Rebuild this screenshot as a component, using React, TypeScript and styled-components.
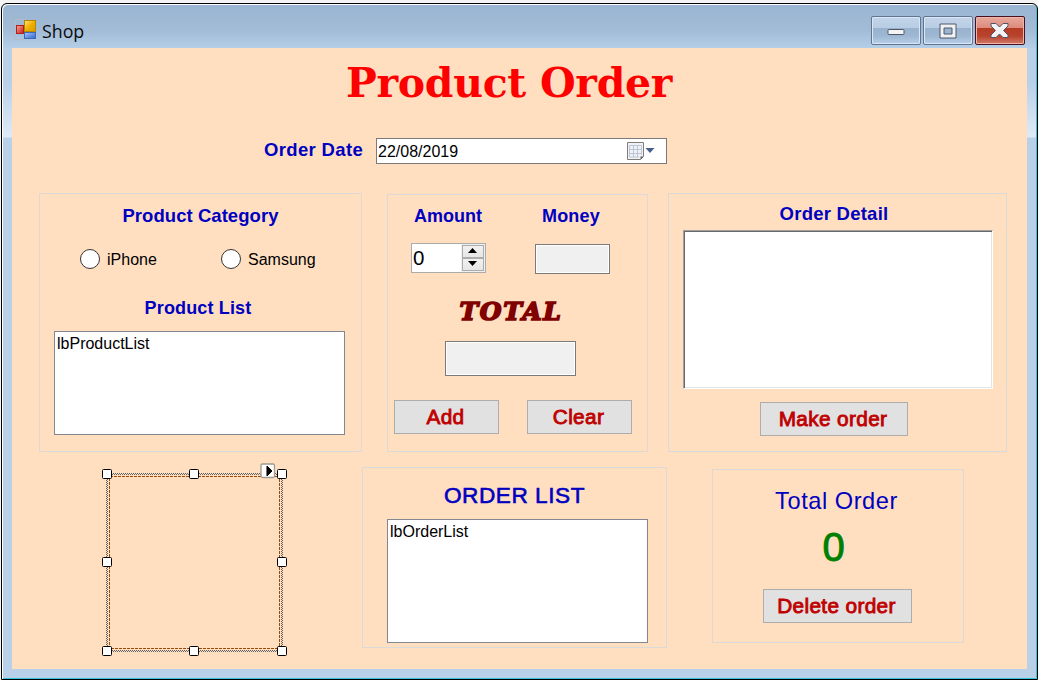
import React from 'react';
import styled, { createGlobalStyle } from 'styled-components';

const GlobalStyle = createGlobalStyle`
  * { box-sizing: border-box; }
  html, body { margin: 0; padding: 0; }
  body { background: #f4f4f5; overflow: hidden; font-family: "Liberation Sans", Arial, sans-serif; }
`;

const Desktop = styled.div`
  width: 1038px;
  height: 680px;
  padding: 3px 0 0 1px;
`;

const WindowFrame = styled.div`
  width: 1037px;
  height: 677px;
  display: flex;
  flex-direction: column;
  border: 1px solid #000;
  border-radius: 6px 6px 0 0;
  padding: 1px 9px 10px 10px;
  background:
    linear-gradient(#b9d0e9 0, #b9d0e9 34px, #dfeaf6 88px, #b9d0e9 89px) 0 45px / 100% 100% no-repeat,
    linear-gradient(#9ab5d2 0, #a2bbd6 26px, #b4cde7 43px, #b9d0e9 45px);
  box-shadow: inset 1px 1px 0 #fff, inset -1px -1px 0 #35c4dc;
`;

const TitleBar = styled.header`
  height: 43px;
  flex: none;
  display: flex;
  align-items: flex-start;
  padding: 0 3px 0 3px;
`;

const AppIcon = styled.svg`
  width: 21px;
  height: 21px;
  margin-top: 14px;
`;

const WindowTitle = styled.span`
  flex: 1;
  margin: 14px 0 0 6px;
  font: 17.8px/24px "Open Sans", "Noto Sans", sans-serif;
  color: #0a0a0a;
`;

const Captions = styled.div`
  display: flex;
  gap: 2px;
  margin-top: 11px;
`;

const CaptionButton = styled.button<{ $close?: boolean }>`
  width: 50px;
  height: 29px;
  padding: 0 1px 0 0;
  border: 1px solid ${p => (p.$close ? '#4a1020' : '#5f7592')};
  border-radius: 2px;
  display: grid;
  place-items: center;
  background: ${p =>
    p.$close
      ? 'linear-gradient(#e7a99d 0, #dc8a7b 11px, #b43c25 11px, #b8422b 19px, #d17a68 100%)'
      : 'linear-gradient(#c2d4e8 0, #b8cde3 11px, #98b1cd 11px, #9eb7d2 19px, #b8d0e9 100%)'};
  box-shadow: inset 0 0 0 1px ${p => (p.$close ? '#eeb5aa' : '#dbe7f4')};
`;

const Client = styled.main`
  flex: 1;
  width: 1015px;
  background: #ffdfc0;
  display: flex;
  flex-direction: column;
`;

const Heading = styled.h1`
  margin: 4px 0 0;
  padding-right: 21px;
  height: 62px;
  text-align: center;
  font: bold 41px/62px "DejaVu Serif", serif;
  letter-spacing: -0.3px;
  white-space: nowrap;
  color: #f00;
`;

const DateRow = styled.div`
  display: flex;
  height: 26px;
  margin: 24px 0 0 252px;
`;

const Label = styled.span<{
  $size?: number;
  $bold?: boolean;
  $spacing?: number;
  $line?: number;
  $stroke?: number;
  $color?: string;
  $shift?: number;
  $top?: number;
}>`
  display: block;
  white-space: nowrap;
  text-align: center;
  margin-top: ${p => p.$top ?? 0}px;
  font-size: ${p => p.$size ?? 18}px;
  font-weight: ${p => (p.$bold ? 700 : 400)};
  line-height: ${p => p.$line ?? 20}px;
  letter-spacing: ${p => p.$spacing ?? 0}px;
  padding-right: ${p => p.$shift ?? 0}px;
  color: ${p => p.$color ?? '#0000c0'};
  -webkit-text-stroke: ${p => p.$stroke ?? 0}px ${p => p.$color ?? '#0000c0'};
`;

const DateLabel = styled.div`
  width: 112px;
  padding-top: 2px;
  display: flex;
`;

const DatePicker = styled.div`
  width: 291px;
  height: 26px;
  border: 1px solid #7a7a7a;
  background: #fff;
  display: flex;
  align-items: center;
  padding: 0 11px 0 1px;
  font-size: 16px;
  color: #000;
`;

const DateValue = styled.span`
  flex: 1;
  line-height: 24px;
  padding-top: 1px;
`;

const GroupRow = styled.section<{ $top: number; $left: number }>`
  display: flex;
  align-items: flex-start;
  margin: ${p => p.$top}px 0 0 ${p => p.$left}px;
`;

const Group = styled.div<{ $w: number; $h: number; $x?: number; $y?: number; $pad?: number }>`
  width: ${p => p.$w}px;
  height: ${p => p.$h}px;
  margin: ${p => p.$y ?? 0}px 0 0 ${p => p.$x ?? 0}px;
  padding-top: ${p => p.$pad ?? 0}px;
  border: 1px solid #dcdad9;
  display: flex;
  flex-direction: column;
`;

const Radios = styled.div`
  display: flex;
  margin: 22px 0 28px 40px;
`;

const Radio = styled.label<{ $w: number }>`
  display: flex;
  align-items: center;
  width: ${p => p.$w}px;
  height: 22px;
  gap: 7px;
  font-size: 16px;
  line-height: 20px;
  color: #000;
`;

const RadioText = styled.span`
  padding-top: 2px;
`;

const RadioDot = styled.span`
  width: 20px;
  height: 20px;
  border: 1px solid #333;
  border-radius: 50%;
  background: #fff;
`;

const ListBox = styled.div<{ $w: number; $h: number; $x: number; $y: number }>`
  width: ${p => p.$w}px;
  height: ${p => p.$h}px;
  margin: ${p => p.$y}px 0 0 ${p => p.$x}px;
  border: 1px solid #828790;
  background: #fff;
  padding: 2px;
  font-size: 16px;
  line-height: 20px;
  color: #000;
`;

const Pair = styled.div<{ $x: number; $gap: number; $y?: number }>`
  display: flex;
  gap: ${p => p.$gap}px;
  margin: ${p => p.$y ?? 0}px 0 0 ${p => p.$x}px;
`;

const Spinner = styled.div`
  width: 75px;
  height: 30px;
  border: 1px solid #ababab;
  background: #fff;
  display: flex;
  justify-content: space-between;
  font-size: 20.5px;
  line-height: 28px;
  padding-left: 1px;
  color: #000;
`;

const SpinButtons = styled.div`
  display: flex;
  flex-direction: column;
  width: 24px;
  padding: 1px;
  background: #f0f0f0;
`;

const SpinButton = styled.span`
  flex: 1;
  display: flex;
  justify-content: center;
  padding: 2px 1px 0 0;
  border: 1px solid #acacac;
  background: linear-gradient(#f1f1f1, #e6e6e6);
`;

const ReadOnly = styled.div<{ $w: number; $h: number; $x?: number; $y: number }>`
  width: ${p => p.$w}px;
  height: ${p => p.$h}px;
  margin: ${p => p.$y}px 0 0 ${p => p.$x ?? 0}px;
  border: 1px solid #7a7a7a;
  background: #f0f0f0;
  box-shadow: inset 0 0 0 1px #fff;
`;

const Total = styled.span`
  display: block;
  height: 30px;
  margin: 23px 0 0 -13px;
  text-align: center;
  font: italic bold 25px/30px "DejaVu Serif", serif;
  letter-spacing: 1.7px;
  -webkit-text-stroke: 1.7px #800000;
  color: #800000;
`;

const Button = styled.button<{ $w: number; $x?: number; $y?: number }>`
  width: ${p => p.$w}px;
  height: 34px;
  margin: ${p => p.$y ?? 0}px 0 0 ${p => p.$x ?? 0}px;
  padding: 0 2px 0 0;
  border: 1px solid #adadad;
  background: #e1e1e1;
  font: 20.8px/30px "Liberation Sans", Arial, sans-serif;
  letter-spacing: 0.35px;
  -webkit-text-stroke: 0.85px #c00000;
  color: #c00000;
`;

const RichText = styled.div`
  width: 310px;
  height: 159px;
  margin: 6px 0 0 14px;
  background: #fff;
  border: 1px solid;
  border-color: #a0a0a0 #fff #fff #a0a0a0;
  box-shadow: inset 1px 1px 0 #696969, inset -1px -1px 0 #e3e3e3;
`;

const PictureBox = styled.svg`
  width: 190px;
  height: 200px;
  display: block;
`;

const handles = [
  [102, 469], [189, 469], [277, 469],
  [102, 557], [277, 557],
  [102, 646], [189, 646], [277, 646],
];

function SelectedPicture() {
  return (
    <PictureBox viewBox="100 460 190 200" shapeRendering="crispEdges">
      <defs>
        <pattern id="hatch" width="2" height="2" patternUnits="userSpaceOnUse">
          <rect width="1" height="1" fill="#5f6064" />
          <rect x="1" y="1" width="1" height="1" fill="#5f6064" />
        </pattern>
      </defs>
      <path d="M106 473H283V652H106ZM108 475V650H281V475Z" fill="url(#hatch)" fillRule="evenodd" />
      <rect x="109.500" y="476.500" width="170" height="172" fill="none" stroke="#964a08" strokeDasharray="3 1" />
      {handles.map(([x, y]) => (
        <rect key={`${x}-${y}`} x={x + 0.5} y={y + 0.5} width="9" height="9" rx="1" fill="#fff" stroke="#000" shapeRendering="auto" />
      ))}
      <rect x="261" y="464" width="13.500" height="13.500" rx="1.500" fill="#fff" stroke="#a09a90" strokeWidth="1.300" shapeRendering="auto" />
      <path d="M266 466H268V476H266Z" fill="#77736e" />
      <path d="M267 466V476L272 471Z" fill="#000" />
    </PictureBox>
  );
}

export default function App() {
  return (
    <>
      <GlobalStyle />
      <Desktop>
        <WindowFrame>
          <TitleBar>
            <AppIcon viewBox="0 0 21 21">
              <defs>
                <linearGradient id="gold" x1="0" y1="0" x2="1" y2="1"><stop offset="0" stopColor="#ffe680" /><stop offset=".5" stopColor="#efb000" /><stop offset="1" stopColor="#d89a00" /></linearGradient>
                <linearGradient id="rose" x1="0" y1="0" x2="1" y2="1"><stop offset="0" stopColor="#f5a9a0" /><stop offset="1" stopColor="#c51a10" /></linearGradient>
                <linearGradient id="azure" x1="0" y1="0" x2="1" y2="1"><stop offset="0" stopColor="#a9c8ff" /><stop offset="1" stopColor="#2c62c8" /></linearGradient>
              </defs>
              <path d="M9 .5H.5V20.500H9" fill="none" stroke="#b4bcc4" />
              <rect x="9.500" y="1.500" width="11" height="11" fill="url(#gold)" stroke="#b58500" />
              <rect x="1.500" y="6.500" width="7" height="8" fill="url(#rose)" stroke="#b02018" />
              <rect x="9.500" y="13.500" width="11" height="6" fill="url(#azure)" stroke="#3f69b5" />
            </AppIcon>
            <WindowTitle>Shop</WindowTitle>
            <Captions>
              <CaptionButton aria-label="Minimize">
                <svg width="18" height="8" viewBox="0 0 18 8"><rect x="1" y="2.500" width="16" height="5" rx=".8" fill="#f4f4f4" stroke="#4f586a" /></svg>
              </CaptionButton>
              <CaptionButton aria-label="Maximize">
                <svg width="18" height="16" viewBox="0 0 18 16"><path d="M1 1H17V15H1ZM5 5V11H13V5Z" fill="#f1f1f3" fillRule="evenodd" stroke="#4f586a" strokeLinejoin="round" /></svg>
              </CaptionButton>
              <CaptionButton aria-label="Close" $close>
                <svg width="19" height="17" viewBox="0 0 19 17"><path d="M1 1.500H6L9.500 5L13 1.500H18V4L13.500 8.500L18 13V15.500H13L9.500 12L6 15.500H1V13L5.500 8.500L1 4Z" fill="#f3f3f3" stroke="#50566a" strokeLinejoin="round" /></svg>
              </CaptionButton>
            </Captions>
          </TitleBar>
          <Client>
            <Heading>Product Order</Heading>
            <DateRow>
              <DateLabel><Label $bold $size={18.5} $spacing={0.35}>Order Date</Label></DateLabel>
              <DatePicker>
                <DateValue>22/08/2019</DateValue>
                <svg width="29" height="20" viewBox="0 0 29 20">
                  <path d="M1.500 1.500H17.500V15.500L14.500 18.500H1.500Z" fill="#eef1f6" stroke="#827c7a" />
                  <path d="M3.500 4.500H15.500M3.500 8.500H15.500M3.500 12.500H15.500M3.500 16H13M3.500 4.500V16M7.500 4.500V16M11.500 4.500V16M15.500 4.500V14" stroke="#bcc6d6" fill="none" />
                  <path d="M14.500 18.500V15.500H17.500Z" fill="#5d5b60" />
                  <path d="M19.500 7H28.500L24 12Z" fill="#465f8c" />
                </svg>
              </DatePicker>
            </DateRow>

            <GroupRow $top={29} $left={27}>
              <Group $w={323} $h={259} $pad={12}>
                <Label $bold $size={18.5} $spacing={0.05}>Product Category</Label>
                <Radios>
                  <Radio $w={141}><RadioDot /><RadioText>iPhone</RadioText></Radio>
                  <Radio $w={110}><RadioDot /><RadioText>Samsung</RadioText></Radio>
                </Radios>
                <Label $bold $spacing={0.15} $shift={5}>Product List</Label>
                <ListBox $w={291} $h={104} $x={14} $y={13}>lbProductList</ListBox>
              </Group>
              <Group $w={261} $h={258} $x={25} $y={1} $pad={11}>
                <Pair $x={26} $gap={60}>
                  <Label $bold>Amount</Label>
                  <Label $bold $spacing={0.2}>Money</Label>
                </Pair>
                <Pair $x={23} $gap={49} $y={17}>
                  <Spinner>
                    0
                    <SpinButtons>
                      <SpinButton><svg width="9" height="5" viewBox="0 0 9 5"><path d="M0 5L4.500 0L9 5Z" /></svg></SpinButton>
                      <SpinButton><svg width="9" height="5" viewBox="0 0 9 5"><path d="M0 0L4.500 5L9 0Z" /></svg></SpinButton>
                    </SpinButtons>
                  </Spinner>
                  <ReadOnly $w={75} $h={30} $y={1} />
                </Pair>
                <Total>TOTAL</Total>
                <ReadOnly $w={131} $h={35} $x={57} $y={14} />
                <Pair $x={6} $gap={28} $y={24}>
                  <Button $w={105}>Add</Button>
                  <Button $w={105}>Clear</Button>
                </Pair>
              </Group>
              <Group $w={339} $h={259} $x={20} $pad={10}>
                <Label $bold $size={18.5} $spacing={0.25} $shift={7}>Order Detail</Label>
                <RichText />
                <Button $w={148} $x={91} $y={13}>Make order</Button>
              </Group>
            </GroupRow>

            <GroupRow $top={8} $left={88}>
              <SelectedPicture />
              <Group $w={305} $h={181} $x={72} $y={7} $pad={16}>
                <Label $size={22.6} $line={24} $spacing={0.55} $stroke={0.6}>ORDER LIST</Label>
                <ListBox $w={261} $h={124} $x={24} $y={11}>lbOrderList</ListBox>
              </Group>
              <Group $w={252} $h={174} $x={45} $y={9} $pad={19}>
                <Label $size={23.6} $line={24} $spacing={0.55} $shift={3}>Total Order</Label>
                <Label $size={40} $line={48} $top={10} $stroke={0.9} $color="#008000" $shift={9}>0</Label>
                <Button $w={149} $x={50} $y={18}>Delete order</Button>
              </Group>
            </GroupRow>
          </Client>
        </WindowFrame>
      </Desktop>
    </>
  );
}
